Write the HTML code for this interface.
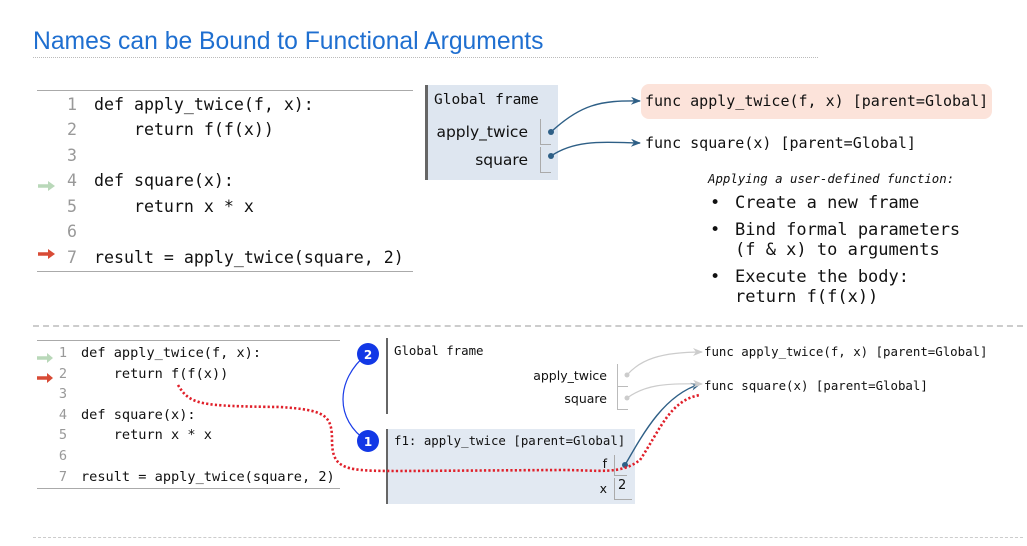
<!DOCTYPE html>
<html><head><meta charset="utf-8"><style>
body{margin:0;width:1027px;height:546px;background:#fff;position:relative;overflow:hidden;font-family:"DejaVu Sans Mono","Liberation Mono",monospace;color:#111}
.a{position:absolute;white-space:pre}
.t{font-family:"Liberation Sans",sans-serif;font-size:24.7px;color:#1f6fd0;left:33px;top:28px}
.code1{left:34px;top:92px;font-size:16.6px;line-height:25.45px}
.code2{left:34px;top:343px;font-size:13.6px;line-height:20.6px}
.n{color:#999;display:inline-block;text-align:right}
.code1 .n{width:43px;margin-right:17px}
.code2 .n{width:33px;margin-right:14px}
.sans{font-family:"DejaVu Sans","Liberation Sans",sans-serif}
.b{font-size:17px;line-height:20px}
</style></head><body>
<div class="a t">Names can be Bound to Functional Arguments</div>
<div class="a" style="left:33px;top:57px;width:785px;border-top:1px dotted #bbb"></div>

<div class="a" style="left:37px;top:90px;width:376px;border-top:1px solid #aaa"></div>
<div class="a" style="left:37px;top:271px;width:376px;border-top:1px solid #aaa"></div>
<div class="a code1"><span class="n">1</span>def apply_twice(f, x):
<span class="n">2</span>    return f(f(x))
<span class="n">3</span>
<span class="n">4</span>def square(x):
<span class="n">5</span>    return x * x
<span class="n">6</span>
<span class="n">7</span>result = apply_twice(square, 2)</div>

<div class="a" style="left:425px;top:85px;width:130px;height:95px;background:#dee6f0;border-left:3px solid #666"></div>
<div class="a" style="left:434px;top:92px;font-size:14.5px">Global frame</div>
<div class="a sans" style="left:420px;top:123px;width:108px;text-align:right;font-size:15.5px">apply_twice</div>
<div class="a sans" style="left:420px;top:151px;width:108px;text-align:right;font-size:15.5px">square</div>
<div class="a" style="left:540px;top:119px;width:10px;height:25px;border-left:1px solid #aaa;border-bottom:1px solid #aaa"></div>
<div class="a" style="left:540px;top:147px;width:10px;height:25px;border-left:1px solid #aaa;border-bottom:1px solid #aaa"></div>

<div class="a" style="left:641px;top:84px;width:351px;height:35px;background:#fce3da;border-radius:8px"></div>
<div class="a" style="left:645px;top:92px;font-size:15px">func apply_twice(f, x) [parent=Global]</div>
<div class="a" style="left:645px;top:134px;font-size:15px">func square(x) [parent=Global]</div>
<div class="a" style="left:708px;top:171px;font-size:12.4px;font-style:italic">Applying a user-defined function:</div>
<div class="a b" style="left:710px;top:193px">•</div><div class="a b" style="left:735px;top:193px">Create a new frame</div>
<div class="a b" style="left:710px;top:220px">•</div><div class="a b" style="left:735px;top:220px">Bind formal parameters
(f &amp; x) to arguments</div>
<div class="a b" style="left:710px;top:267px">•</div><div class="a b" style="left:735px;top:267px">Execute the body:
return f(f(x))</div>

<div class="a" style="left:33px;top:325px;width:990px;border-top:2px dashed #ccc"></div>

<div class="a" style="left:37px;top:340px;width:303px;border-top:1px solid #aaa"></div>
<div class="a" style="left:37px;top:488px;width:303px;border-top:1px solid #aaa"></div>
<div class="a code2"><span class="n">1</span>def apply_twice(f, x):
<span class="n">2</span>    return f(f(x))
<span class="n">3</span>
<span class="n">4</span>def square(x):
<span class="n">5</span>    return x * x
<span class="n">6</span>
<span class="n">7</span>result = apply_twice(square, 2)</div>

<div class="a" style="left:386px;top:338px;width:0;height:76px;border-left:2px solid #666"></div>
<div class="a" style="left:394px;top:343px;font-size:12.4px">Global frame</div>
<div class="a sans" style="left:500px;top:368px;width:107px;text-align:right;font-size:12.5px">apply_twice</div>
<div class="a sans" style="left:500px;top:391px;width:107px;text-align:right;font-size:12.5px">square</div>
<div class="a" style="left:617px;top:364px;width:10px;height:22px;border-left:1px solid #bbb;border-bottom:1px solid #bbb"></div>
<div class="a" style="left:617px;top:387px;width:10px;height:22px;border-left:1px solid #bbb;border-bottom:1px solid #bbb"></div>
<div class="a" style="left:386px;top:429px;width:247px;height:75px;background:#e2e9f2;border-left:2px solid #666"></div>
<div class="a" style="left:394px;top:433px;font-size:12.4px">f1: apply_twice [parent=Global]</div>
<div class="a sans" style="left:590px;top:456px;width:17px;text-align:right;font-size:12.5px">f</div>
<div class="a sans" style="left:590px;top:481px;width:17px;text-align:right;font-size:12.5px">x</div>
<div class="a" style="left:614px;top:455px;width:12px;height:20px;border-left:1px solid #aaa;border-bottom:1px solid #aaa"></div>
<div class="a sans" style="left:614px;top:478px;width:14px;height:21px;border-left:1px solid #aaa;border-bottom:1px solid #aaa;font-size:13px;padding-left:3px">2</div>
<div class="a" style="left:704px;top:344px;font-size:12.4px">func apply_twice(f, x) [parent=Global]</div>
<div class="a" style="left:704px;top:378px;font-size:12.4px">func square(x) [parent=Global]</div>

<div class="a" style="left:33px;top:537px;width:990px;border-top:1px dashed #ccc"></div>

<svg class="a" style="left:0;top:0" width="1027" height="546">
<defs>
<marker id="ab" markerWidth="10" markerHeight="8" refX="9" refY="4" orient="auto" markerUnits="userSpaceOnUse"><path d="M0,0 L10,4 L0,8 L3,4z" fill="#2e5f86"/></marker>
<marker id="ag" markerWidth="10" markerHeight="8" refX="9" refY="4" orient="auto" markerUnits="userSpaceOnUse"><path d="M0,0 L10,4 L0,8 L3,4z" fill="#ccc"/></marker>
</defs>
<g fill="none" stroke="#2e5f86" stroke-width="1.4">
<path d="M551,132 C580,105 600,100 640,101" marker-end="url(#ab)"/>
<path d="M551,156 C575,140 600,142 640,143" marker-end="url(#ab)"/>
<path d="M625,465 C645,430 665,395 700,384" marker-end="url(#ab)"/>
</g>
<circle cx="551" cy="132" r="3" fill="#2e5f86"/><circle cx="551" cy="156" r="3" fill="#2e5f86"/>
<circle cx="625" cy="465" r="3" fill="#2e5f86"/>
<g fill="none" stroke="#ccc" stroke-width="1.2">
<path d="M627,375 C640,360 660,352 702,352" marker-end="url(#ag)"/>
<path d="M627,398 C645,385 665,383 702,384" marker-end="url(#ag)"/>
</g>
<circle cx="627" cy="375" r="2.5" fill="#ccc"/><circle cx="627" cy="398" r="2.5" fill="#ccc"/>
<path d="M367,354 C335,380 335,420 367,441" fill="none" stroke="#1a3ce8" stroke-width="1.2"/>
<circle cx="368" cy="354" r="11" fill="#1238e6"/><circle cx="368" cy="441" r="11" fill="#1238e6"/>
<text x="368" y="359" fill="#fff" font-family="DejaVu Sans" font-weight="bold" font-size="12" text-anchor="middle">2</text>
<text x="368" y="446" fill="#fff" font-family="DejaVu Sans" font-weight="bold" font-size="12" text-anchor="middle">1</text>
<path d="M178,385 C190,405 200,406 280,407 C325,410 332,415 332,440 C332,470 345,471 400,471 L560,470 C600,470 620,475 640,460 C660,430 670,400 700,395" fill="none" stroke="#e0202a" stroke-width="2.6" stroke-dasharray="2.2,2.2"/>
<path d="M38,186 h12" stroke="#b9d8b9" stroke-width="3.5"/><path d="M48,181 l7,5 l-7,5z" fill="#b9d8b9"/>
<path d="M38,254 h12" stroke="#d84b36" stroke-width="3.5"/><path d="M48,249 l7,5 l-7,5z" fill="#d84b36"/>
<path d="M37,358 h11" stroke="#b9d8b9" stroke-width="3.5"/><path d="M47,353 l6,5 l-6,5z" fill="#b9d8b9"/>
<path d="M37,378 h11" stroke="#d84b36" stroke-width="3.5"/><path d="M47,373 l6,5 l-6,5z" fill="#d84b36"/>
</svg>
</body></html>
